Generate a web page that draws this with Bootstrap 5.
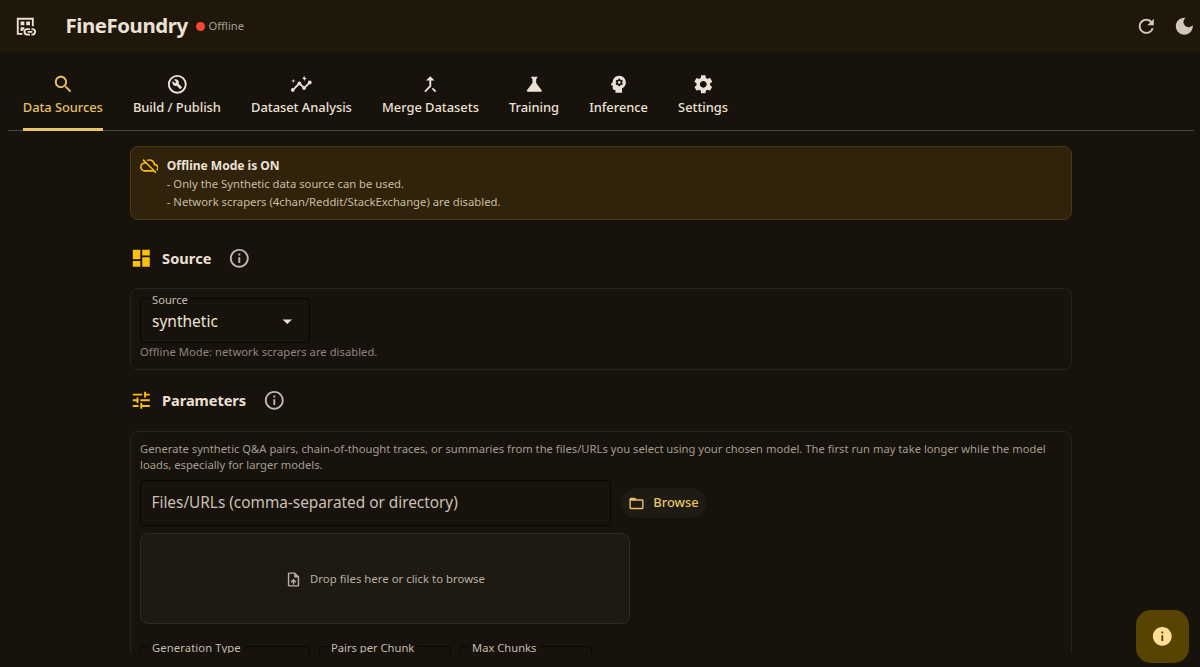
<!DOCTYPE html>
<html lang="en" data-bs-theme="dark">
<head>
<meta charset="utf-8">
<meta name="viewport" content="width=device-width, initial-scale=1">
<title>FineFoundry</title>
<link href="https://cdn.jsdelivr.net/npm/bootstrap@5.3.0/dist/css/bootstrap.min.css" rel="stylesheet">
<style>
body{background:#17120b;color:#ece1d4;font-family:"Noto Sans","Open Sans",sans-serif;height:667px;overflow:hidden}
svg{fill:currentColor;display:block;flex:none;width:22.6px;height:22.6px}
.t{white-space:nowrap;display:inline-block}
.topbar{height:52px;background:#20170b;padding:0 4px 0 14px}
.topbar .act{color:#d3c7b8}
.act+.act{margin-left:15.5px}
.brand{font-size:20.4px;font-weight:700;line-height:28px;margin:-2px 0 0 29px;letter-spacing:-.438px}
.dot{width:9px;height:9px;border-radius:50%;background:#fb4434;margin:0 4px 0 8px}
.state{font-size:11.2px;color:#a79e92}
.tabs{height:79px;margin:0 6px 0 8px;padding:0 14.8px;gap:30.1px;border-bottom:1px solid #4c463c}
.tabs a{color:#ece1d4;text-decoration:none;padding-top:21px;height:79px;border-bottom:3px solid transparent;font-size:12.9px;line-height:18px;font-weight:500;letter-spacing:-.025px}
.tabs a .t{margin-top:2px}
.tabs a.active{color:#e3c263;border-color:#e9c767;letter-spacing:-.059px}
.pane{height:522px;overflow:hidden}
.column{width:942px;margin-left:130px;padding-top:15px}
.notice{height:74px;background:#2f230b;border:1px solid #4c3b0b;border-radius:8px;padding:9px 9px 8px 8.5px;gap:8.5px}
.notice svg,.sec>svg{color:#fcbf0e}
.notice svg{width:18.8px;height:18.8px}
.n1{font-size:12.1px;font-weight:700;line-height:19px;letter-spacing:-.04px}
.n2{font-size:11.25px;line-height:18px;color:#c9bda5;letter-spacing:.008px}
.sec{height:22px;gap:9.5px}
.sec b{font-size:14.6px;line-height:22px;margin-top:-1px;letter-spacing:.04px}
.sec .inf{color:#c2bab0;margin-left:7px}
.sec-source{margin-top:27px}
.sec-params{margin-top:19px}
.sec-params b{letter-spacing:-.063px}
.panel{border:1px solid #29231b;border-radius:8px;padding:9px}
.panel-source{margin-top:19px;height:82px;padding-top:1px}
.panel-params{margin-top:20px;height:300px}
.fld{border:1px solid #080603;border-radius:4px;height:46px;padding:0 10.5px;margin:0;min-width:0}
fieldset.fld{height:53px;padding:0 8px}
fieldset legend{float:none;width:auto;margin:0;padding:3px 3px 0;font-size:11.2px;line-height:14px;color:#c5bcb0}
legend .t{display:block}
.w-select{width:170px}
.w-number{width:132px}
.w-files{width:471px}
.choice{margin-top:3px;padding:0 2px 0 3px}
.val{font-size:15.5px;line-height:20px}
.hint-text{color:#cbc0b3;font-size:15.4px;letter-spacing:-.02px}
.help{display:block;font-size:11.2px;line-height:14px;color:#8f8679;margin-top:2px;letter-spacing:.045px}
.desc{font-size:11.2px;line-height:16px;color:#a59d92;letter-spacing:.016px;margin-bottom:7px}
.browse{height:30px;width:85px;border-radius:15px;background:#1f1a13;color:#e5c466;font-size:12.9px;font-weight:500;gap:8px;margin-left:10px}
.browse svg,.drop svg{width:17px;height:17px}
.drop{width:490px;height:91px;background:#1e1913;border:1px solid #302a22;border-radius:8px;gap:8px;font-size:11.3px;letter-spacing:.04px;color:#b9b0a4;margin-top:7px;padding-top:1px}
.options{margin-top:14px;gap:9px}
.ls-1{letter-spacing:.13px}
.fab{position:absolute;left:1136px;top:610px;width:53px;height:53px;border-radius:15px;background:#574400;color:#ffdf98}
</style>
</head>
<body>
<header class="topbar d-flex align-items-center">
<svg viewBox="0 0 24 24"><path d="M3 3h18v9h-2V5H5v14h4v2H3zM7 7h4v4H7zm6 0h4v4h-4zM7 13h4v1.5L9 17H7zM14 14h3v2h-3a1.9 1.9 0 0 0 0 3.8h3v2h-3a3.9 3.9 0 0 1 0-7.8zM18.5 14h1a3.9 3.9 0 0 1 0 7.8h-1v-2h1a1.9 1.9 0 0 0 0-3.8h-1zM14.5 17h5v1.8h-5z"/></svg>
<span class="brand t">FineFoundry</span><i class="dot"></i><span class="state t">Offline</span>
<svg class="act ms-auto" viewBox="0 0 24 24"><path d="M17.65 6.35C16.2 4.9 14.21 4 12 4c-4.42 0-7.99 3.58-7.99 8s3.57 8 7.99 8c3.73 0 6.84-2.55 7.73-6h-2.08c-.82 2.33-3.04 4-5.65 4-3.31 0-6-2.69-6-6s2.69-6 6-6c1.66 0 3.14.69 4.22 1.78L13 11h7V4l-2.35 2.35z"/></svg>
<svg class="act" viewBox="0 0 24 24"><path d="M12 3c-4.97 0-9 4.03-9 9s4.03 9 9 9 9-4.03 9-9c0-.46-.04-.92-.1-1.36-.98 1.37-2.58 2.26-4.4 2.26-2.98 0-5.4-2.42-5.4-5.4 0-1.81.89-3.42 2.26-4.4-.44-.06-.9-.1-1.36-.1z"/></svg>
</header>
<nav class="tabs d-flex">
<a href="#" class="active d-flex flex-column align-items-center"><svg viewBox="0 0 24 24"><path d="M15.5 14h-.79l-.28-.27C15.41 12.59 16 11.11 16 9.5 16 5.91 13.09 3 9.5 3S3 5.91 3 9.5 5.91 16 9.5 16c1.61 0 3.09-.59 4.23-1.57l.27.28v.79l5 4.99L20.49 19l-4.99-5zm-6 0C7.01 14 5 11.99 5 9.5S7.01 5 9.5 5 14 7.01 14 9.5 11.99 14 9.5 14z"/></svg><span class="t">Data Sources</span></a>
<a href="#" class="d-flex flex-column align-items-center"><svg viewBox="0 0 24 24"><path fill-rule="evenodd" d="M12 2a10 10 0 1 0 0 20 10 10 0 0 0 0-20zm0 18a8 8 0 1 1 0-16 8 8 0 0 1 0 16z"/><path d="M13.49 11.38c.43-1.22.17-2.64-.81-3.62-1.11-1.11-2.79-1.3-4.1-.59l2.35 2.35-1.41 1.41-2.35-2.35c-.71 1.32-.52 2.99.59 4.1.98.98 2.4 1.24 3.62.81l3.41 3.41c.2.2.51.2.71 0l1.4-1.4c.2-.2.2-.51 0-.71l-3.41-3.41z"/></svg><span class="t">Build / Publish</span></a>
<a href="#" class="d-flex flex-column align-items-center"><svg viewBox="0 0 24 24"><path d="M21 8c-1.45 0-2.26 1.44-1.93 2.51l-3.55 3.56c-.3-.09-.74-.09-1.04 0l-2.55-2.55C12.27 10.45 11.46 9 10 9c-1.45 0-2.27 1.44-1.93 2.52l-4.56 4.55C2.44 15.74 1 16.55 1 18c0 1.1.9 2 2 2 1.45 0 2.26-1.44 1.93-2.51l4.55-4.56c.3.09.74.09 1.04 0l2.55 2.55C12.73 16.55 13.54 18 15 18c1.45 0 2.27-1.44 1.93-2.52l3.56-3.55C21.56 12.26 23 11.45 23 10c0-1.1-.9-2-2-2zM15 9l.94-2.07L18 6l-2.06-.93L15 3l-.92 2.07L13 6l2.08.93zM3.5 11L4 9l2-.5L4 8l-.5-2L3 8l-2 .5L3 9z"/></svg><span class="t">Dataset Analysis</span></a>
<a href="#" class="d-flex flex-column align-items-center"><svg viewBox="0 0 24 24"><path d="M17 20.41L18.41 19 15 15.59 13.59 17 17 20.41zM7.5 8H11v5.59L5.59 19 7 20.41l6-6V8h3.5L12 3.5 7.5 8z"/></svg><span class="t">Merge Datasets</span></a>
<a href="#" class="d-flex flex-column align-items-center"><svg viewBox="0 0 24 24"><path d="M19.8 18.4L14 10.67V6.5l1.35-1.69c.26-.33.03-.81-.39-.81H9.04c-.42 0-.65.48-.39.81L10 6.5v4.17L4.2 18.4c-.49.66-.02 1.6.8 1.6h14c.82 0 1.29-.94.8-1.6z"/></svg><span class="t">Training</span></a>
<a href="#" class="d-flex flex-column align-items-center"><svg viewBox="0 0 24 24"><path fill-rule="evenodd" d="M13 8.57a1.43 1.43 0 1 0 0 2.86 1.43 1.43 0 0 0 0-2.86zM13 3C9.25 3 6.2 5.94 6.02 9.64L4.1 12.2c-.25.33-.01.8.4.8H6v3c0 1.1.9 2 2 2h1v3h7v-4.68c2.36-1.12 4-3.53 4-6.32 0-3.87-3.13-7-7-7zm3 7c0 .13-.01.26-.02.39l.83.66c.08.06.1.16.05.25l-.8 1.39c-.05.09-.16.12-.24.09l-.99-.4c-.21.16-.43.29-.67.39L14 13.83c-.01.1-.1.17-.2.17h-1.6c-.1 0-.18-.07-.2-.17l-.15-1.06c-.25-.1-.47-.23-.68-.39l-.99.4c-.09.03-.2 0-.25-.09l-.8-1.39c-.05-.08-.03-.19.05-.25l.84-.66a4 4 0 0 1 .02-.78l-.85-.66c-.08-.06-.1-.16-.05-.26l.8-1.38c.05-.09.15-.12.24-.09l1 .4c.2-.15.43-.29.67-.39L12 6.17c.02-.1.1-.17.2-.17h1.6c.1 0 .18.07.2.17l.15 1.06c.24.1.46.23.67.39l1-.4c.09-.03.2 0 .24.09l.8 1.38c.05.09.03.2-.05.26l-.85.66c.03.12.04.25.04.39z"/></svg><span class="t">Inference</span></a>
<a href="#" class="d-flex flex-column align-items-center"><svg viewBox="0 0 24 24"><path d="M19.14 12.94c.04-.3.06-.61.06-.94 0-.32-.02-.64-.07-.94l2.03-1.58c.18-.14.23-.41.12-.61l-1.92-3.32c-.12-.22-.37-.29-.59-.22l-2.39.96c-.5-.38-1.03-.7-1.62-.94L14.4 2.81c-.04-.24-.24-.41-.48-.41h-3.84c-.24 0-.43.17-.47.41L9.25 5.35c-.59.24-1.13.57-1.62.94l-2.39-.96c-.22-.08-.47 0-.59.22L2.74 8.87c-.12.21-.08.47.12.61l2.03 1.58c-.05.3-.09.63-.09.94s.02.64.07.94l-2.03 1.58c-.18.14-.23.41-.12.61l1.92 3.32c.12.22.37.29.59.22l2.39-.96c.5.38 1.03.7 1.62.94l.36 2.54c.05.24.24.41.48.41h3.84c.24 0 .44-.17.47-.41l.36-2.54c.59-.24 1.13-.56 1.62-.94l2.39.96c.22.08.47 0 .59-.22l1.92-3.32c.12-.22.07-.47-.12-.61l-2.01-1.58zM12 15.6c-1.98 0-3.6-1.62-3.6-3.6s1.62-3.6 3.6-3.6 3.6 1.62 3.6 3.6-1.62 3.6-3.6 3.6z"/></svg><span class="t">Settings</span></a>
</nav>
<main class="pane"><div class="column">
<div class="notice d-flex"><svg viewBox="0 0 24 24"><path d="M24 15c0-2.64-2.05-4.78-4.65-4.96C18.67 6.59 15.64 4 12 4c-1.33 0-2.57.36-3.65.97l1.49 1.49C10.51 6.17 11.23 6 12 6c3.04 0 5.5 2.46 5.5 5.5v.5H19c1.66 0 3 1.34 3 3 0 .99-.48 1.85-1.21 2.4l1.41 1.41c1.09-.92 1.8-2.27 1.8-3.81zM4.41 3.86L3 5.27l2.77 2.77h-.42C2.34 8.36 0 10.91 0 14c0 3.31 2.69 6 6 6h11.73l2 2 1.41-1.41L4.41 3.86zM6 18c-2.21 0-4-1.79-4-4s1.79-4 4-4h1.73l8 8H6z"/></svg>
<div class="d-flex flex-column align-items-start"><span class="t n1">Offline Mode is ON</span><span class="t n2">- Only the Synthetic data source can be used.</span><span class="t n2">- Network scrapers (4chan/Reddit/StackExchange) are disabled.</span></div></div>
<div class="sec sec-source d-flex align-items-center"><svg viewBox="0 0 24 24"><path d="M3 13h8V3H3v10zm0 8h8v-6H3v6zm10 0h8V11h-8v10zm0-18v6h8V3h-8z"/></svg><b class="t">Source</b><svg class="inf" viewBox="0 0 24 24"><path d="M11 7h2v2h-2zm0 4h2v6h-2zm1-9C6.48 2 2 6.48 2 12s4.48 10 10 10 10-4.48 10-10S17.52 2 12 2zm0 18c-4.41 0-8-3.59-8-8s3.59-8 8-8 8 3.59 8 8-3.59 8-8 8z"/></svg></div>
<section class="panel panel-source"><fieldset class="fld w-select"><legend><span class="t">Source</span></legend><div class="choice d-flex align-items-center justify-content-between"><span class="t val">synthetic</span><svg viewBox="0 0 24 24"><path d="M7 10l5 5 5-5z"/></svg></div></fieldset><span class="t help">Offline Mode: network scrapers are disabled.</span></section>
<div class="sec sec-params d-flex align-items-center"><svg viewBox="0 0 24 24"><path d="M3 17v2h6v-2H3zM3 5v2h10V5H3zm10 16v-2h8v-2h-8v-2h-2v6h2zM7 9v2H3v2h4v2h2V9H7zm14 4v-2H11v2h10zm-6-4h2V7h4V5h-4V3h-2v6z"/></svg><b class="t">Parameters</b><svg class="inf" viewBox="0 0 24 24"><path d="M11 7h2v2h-2zm0 4h2v6h-2zm1-9C6.48 2 2 6.48 2 12s4.48 10 10 10 10-4.48 10-10S17.52 2 12 2zm0 18c-4.41 0-8-3.59-8-8s3.59-8 8-8 8 3.59 8 8-3.59 8-8 8z"/></svg></div>
<section class="panel panel-params"><div class="desc d-flex flex-column align-items-start"><span class="t">Generate synthetic Q&amp;A pairs, chain-of-thought traces, or summaries from the files/URLs you select using your chosen model. The first run may take longer while the model</span><span class="t">loads, especially for larger models.</span></div>
<div class="d-flex align-items-center"><div class="fld w-files d-flex align-items-center"><span class="t hint-text">Files/URLs (comma-separated or directory)</span></div><div class="browse d-flex align-items-center justify-content-center"><svg viewBox="0 0 24 24"><path d="M20 6h-8l-2-2H4c-1.1 0-1.99.9-1.99 2L2 18c0 1.1.9 2 2 2h16c1.1 0 2-.9 2-2V8c0-1.1-.9-2-2-2zm0 12H4V8h16v10z"/></svg><span class="t">Browse</span></div></div>
<div class="drop d-flex align-items-center justify-content-center"><svg viewBox="0 0 24 24"><path d="M14 2H6c-1.1 0-1.99.9-1.99 2L4 20c0 1.1.89 2 1.99 2H18c1.1 0 2-.9 2-2V8l-6-6zm4 18H6V4h7v5h5v11zM8 15.01l1.41 1.41L11 14.84V19h2v-4.16l1.59 1.59L16 15.01 12.01 11 8 15.01z"/></svg><span class="t">Drop files here or click to browse</span></div>
<div class="options d-flex"><fieldset class="fld w-select"><legend><span class="t ls-1">Generation Type</span></legend></fieldset><fieldset class="fld w-number"><legend><span class="t">Pairs per Chunk</span></legend></fieldset><fieldset class="fld w-number"><legend><span class="t">Max Chunks</span></legend></fieldset></div>
</section></div></main>
<button class="fab btn border-0 p-0 d-flex align-items-center justify-content-center" aria-label="Info"><svg viewBox="0 0 24 24"><path d="M12 2C6.48 2 2 6.48 2 12s4.48 10 10 10 10-4.48 10-10S17.52 2 12 2zm1 15h-2v-6h2v6zm0-8h-2V7h2v2z"/></svg></button>
<script src="https://cdn.jsdelivr.net/npm/bootstrap@5.3.0/dist/js/bootstrap.bundle.min.js"></script>
</body>
</html>
